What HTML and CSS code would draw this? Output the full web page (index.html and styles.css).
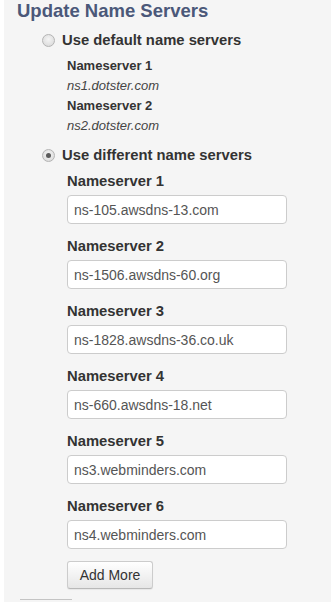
FILE: index.html
```html
<!DOCTYPE html>
<html>
<head>
<meta charset="utf-8">
<link rel="stylesheet" href="styles.css">
</head>
<body>
<div class="panel">
  <h1 class="title">Update Name Servers</h1>
  <div class="option option-first">
    <span class="radio"></span>
    <span class="option-label">Use default name servers</span>
  </div>
  <div class="defaults">
    <div class="def-label">Nameserver 1</div>
    <div class="def-value">ns1.dotster.com</div>
    <div class="def-label">Nameserver 2</div>
    <div class="def-value">ns2.dotster.com</div>
  </div>
  <div class="option option-second">
    <span class="radio radio-checked"></span>
    <span class="option-label">Use different name servers</span>
  </div>
  <div class="fields">
    <div class="field">
      <div class="field-label">Nameserver 1</div>
      <input class="field-input" type="text" value="ns-105.awsdns-13.com">
    </div>
    <div class="field">
      <div class="field-label">Nameserver 2</div>
      <input class="field-input" type="text" value="ns-1506.awsdns-60.org">
    </div>
    <div class="field">
      <div class="field-label">Nameserver 3</div>
      <input class="field-input" type="text" value="ns-1828.awsdns-36.co.uk">
    </div>
    <div class="field">
      <div class="field-label">Nameserver 4</div>
      <input class="field-input" type="text" value="ns-660.awsdns-18.net">
    </div>
    <div class="field">
      <div class="field-label">Nameserver 5</div>
      <input class="field-input" type="text" value="ns3.webminders.com">
    </div>
    <div class="field">
      <div class="field-label">Nameserver 6</div>
      <input class="field-input" type="text" value="ns4.webminders.com">
    </div>
    <button class="add-btn" type="button">Add More</button>
  </div>
  <div class="divider"></div>
</div>
</body>
</html>
```

FILE: styles.css
```css
html, body {
  margin: 0;
  padding: 0;
  background: #ffffff;
}

body {
  font-family: "Liberation Sans", Arial, sans-serif;
  color: #333333;
  overflow: hidden;
}

.panel {
  margin-left: 4px;
  background: #f5f5f5;
  min-height: 602px;
  padding-left: 13px;
  box-sizing: border-box;
}

.title {
  margin: 0;
  font-size: 18.5px;
  line-height: 22px;
  font-weight: bold;
  color: #4b5879;
}

.option {
  display: flex;
  align-items: center;
  gap: 7px;
  margin-left: 25px;
  height: 18px;
}

.option-first {
  margin-top: 9px;
}

.option-second {
  margin-top: 10px;
}

.option-label {
  font-size: 14.8px;
  font-weight: bold;
  line-height: 18px;
  color: #333333;
}

.radio {
  width: 13px;
  height: 13px;
  box-sizing: border-box;
  border-radius: 50%;
  border: 1px solid #b4b4b4;
  background: radial-gradient(circle at 50% 40%, #f4f4f4 0%, #e2e2e2 60%, #d6d6d6 100%);
  display: flex;
  align-items: center;
  justify-content: center;
  flex: none;
}

.radio-checked::after {
  content: "";
  width: 5px;
  height: 5px;
  border-radius: 50%;
  background: #5a5a5a;
}

.defaults {
  margin-left: 50px;
  margin-top: 7px;
}

.def-label {
  font-size: 13px;
  font-weight: bold;
  line-height: 20px;
  color: #333333;
}

.def-value {
  font-size: 13px;
  font-style: italic;
  line-height: 20px;
  color: #444444;
}

.fields {
  margin-left: 50px;
  margin-top: 8px;
  display: flex;
  flex-direction: column;
  align-items: flex-start;
}

.field {
  display: flex;
  flex-direction: column;
  margin-bottom: 13px;
}

.field:last-of-type {
  margin-bottom: 12px;
}

.field-label {
  font-size: 14.8px;
  font-weight: bold;
  line-height: 18px;
  color: #333333;
}

.field-input {
  margin: 5px 0 0 0;
  width: 220px;
  height: 29px;
  box-sizing: border-box;
  border: 1px solid #cccccc;
  border-radius: 4px;
  background: #ffffff;
  padding: 0 6px;
  font-family: "Liberation Sans", Arial, sans-serif;
  font-size: 14px;
  color: #555555;
  outline: none;
}

.add-btn {
  margin: 0;
  width: 86px;
  height: 28px;
  box-sizing: border-box;
  border: 1px solid #cccccc;
  border-bottom-color: #b8b8b8;
  border-radius: 3px;
  background: linear-gradient(#ffffff, #e6e6e6);
  box-shadow: 0 1px 1px rgba(0, 0, 0, 0.06);
  font-family: "Liberation Sans", Arial, sans-serif;
  font-size: 14px;
  color: #333333;
  padding: 0;
}

.divider {
  margin-top: 10px;
  margin-left: 3px;
  width: 52px;
  border-top: 1px solid #c4c4c4;
}
```
